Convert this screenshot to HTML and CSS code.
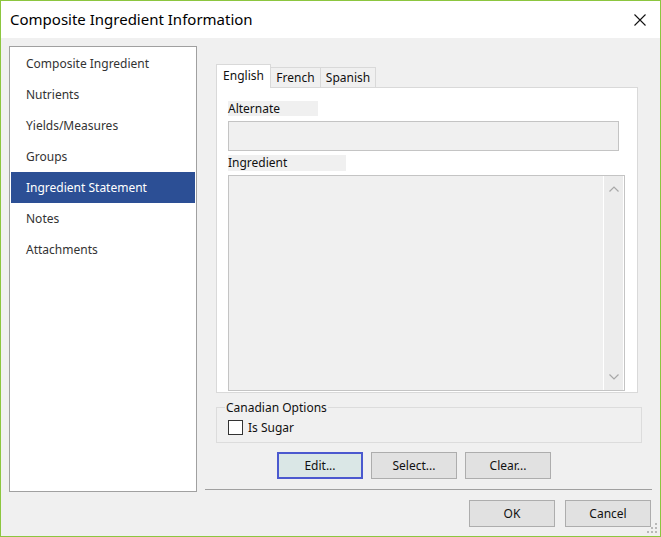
FILE: index.html
```html
<!DOCTYPE html>
<html lang="en">
<head>
    <meta charset="UTF-8">
    <title>Composite Ingredient Information</title>
    <link rel="stylesheet" href="styles.css">
</head>
<body>

<div class="window">
    <div class="titlebar">
        <span class="title">Composite Ingredient Information</span>
        <svg class="close" width="12" height="12" viewBox="0 0 12 12">
            <path d="M0.5 0.5 L11.5 11.5 M11.5 0.5 L0.5 11.5" stroke="#111" stroke-width="1.1" fill="none"/>
        </svg>
    </div>

    <div class="main">
        <ul class="nav_list">
            <li>Composite Ingredient</li>
            <li>Nutrients</li>
            <li>Yields/Measures</li>
            <li>Groups</li>
            <li class="selected">Ingredient Statement</li>
            <li>Notes</li>
            <li>Attachments</li>
        </ul>

        <div class="right_col">
            <div class="tabs">
                <div class="tab_row">
                    <div class="tab tab_active tab_en">English</div>
                    <div class="tab tab_fr">French</div>
                    <div class="tab tab_es">Spanish</div>
                </div>
                <div class="tab_panel">
                    <div class="field_label label_alt">Alternate</div>
                    <div class="text_box"></div>
                    <div class="field_label label_ing">Ingredient</div>
                    <div class="text_area">
                        <div class="text_area_body"></div>
                        <div class="scroll_bar">
                            <svg width="10" height="6" viewBox="0 0 10 6">
                                <path d="M0.5 5.5 L5 1 L9.5 5.5" stroke="#a8a8a8" stroke-width="1.2" fill="none"/>
                            </svg>
                            <svg width="10" height="6" viewBox="0 0 10 6">
                                <path d="M0.5 0.5 L5 5 L9.5 0.5" stroke="#a8a8a8" stroke-width="1.2" fill="none"/>
                            </svg>
                        </div>
                    </div>
                </div>
            </div>

            <fieldset class="options">
                <legend>Canadian Options</legend>
                <label class="check_row"><span class="check_box"></span>Is Sugar</label>
            </fieldset>

            <div class="action_row">
                <button class="btn btn_default">Edit...</button>
                <button class="btn">Select...</button>
                <button class="btn">Clear...</button>
            </div>

            <div class="footer">
                <button class="btn">OK</button>
                <button class="btn">Cancel</button>
            </div>
        </div>
    </div>

    <svg class="grip" width="10" height="10" viewBox="0 0 10 10">
        <rect x="8" y="0" width="2" height="2" fill="#b8b8b8"/>
        <rect x="4" y="4" width="2" height="2" fill="#b8b8b8"/>
        <rect x="8" y="4" width="2" height="2" fill="#b8b8b8"/>
        <rect x="0" y="8" width="2" height="2" fill="#b8b8b8"/>
        <rect x="4" y="8" width="2" height="2" fill="#b8b8b8"/>
        <rect x="8" y="8" width="2" height="2" fill="#b8b8b8"/>
    </svg>
</div>

</body>
</html>
```

FILE: styles.css
```css
* {
    box-sizing: border-box;
    margin: 0;
    padding: 0;
}

body {
    font-family: "Noto Sans", "Open Sans", sans-serif;
    font-size: 12px;
    color: #111;
}

li {
    list-style: none;
}

.window {
    width: 661px;
    height: 537px;
    border: 1px solid #8cc63f;
    background-color: #f0f0f0;
    display: flex;
    flex-direction: column;
    position: relative;
}

.titlebar {
    height: 37px;
    background-color: #fff;
    display: flex;
    align-items: center;
    justify-content: space-between;
    padding: 0 14px 0 9px;
}

.title {
    font-size: 15px;
    color: #000;
    margin-top: -1px;
}

.main {
    display: flex;
    padding: 8px 0 0 8px;
}

.nav_list {
    width: 188px;
    height: 446px;
    border: 1px solid #a0a0a0;
    background-color: #fff;
    padding: 1px;
}

.nav_list li {
    height: 31px;
    line-height: 32px;
    padding-left: 15px;
    color: #333;
}

.nav_list .selected {
    background-color: #2c4f95;
    color: #fff;
}

.right_col {
    width: 447px;
    margin-left: 8px;
    display: flex;
    flex-direction: column;
}

.tabs {
    margin: 18px 0 0 11px;
    width: 422px;
}

.tab_row {
    display: flex;
    align-items: flex-end;
    height: 23px;
}

.tab {
    height: 20px;
    line-height: 19px;
    border: 1px solid #d9d9d9;
    border-bottom: none;
    border-left: none;
    text-align: center;
    background-color: #f0f0f0;
}

.tab_active {
    height: 24px;
    line-height: 21px;
    border-left: 1px solid #d9d9d9;
    background-color: #fff;
    margin-bottom: -1px;
    position: relative;
}

.tab_en {
    width: 55px;
}

.tab_fr {
    width: 50px;
}

.tab_es {
    width: 55px;
}

.tab_panel {
    height: 306px;
    border: 1px solid #d9d9d9;
    background-color: #fff;
    padding: 13px 0 0 11px;
}

.field_label {
    height: 15px;
    line-height: 15px;
    background-color: #f0f0f0;
}

.label_alt {
    width: 90px;
}

.label_ing {
    width: 118px;
    height: 16px;
    margin-top: 4px;
}

.text_box {
    width: 391px;
    height: 30px;
    margin-top: 5px;
    border: 1px solid #c4c4c4;
    background-color: #f0f0f0;
}

.text_area {
    width: 397px;
    height: 216px;
    margin-top: 4px;
    border: 1px solid #c4c4c4;
    background-color: #f0f0f0;
    display: flex;
}

.text_area_body {
    flex: 1;
}

.scroll_bar {
    width: 21px;
    border-left: 1px solid #fff;
    border-right: 1px solid #fff;
    background-color: #ececec;
    display: flex;
    flex-direction: column;
    justify-content: space-between;
    align-items: center;
    padding: 10px 0 10px;
}

.options {
    width: 426px;
    height: 43px;
    margin: 7px 0 0 11px;
    border: 1px solid #dcdcdc;
    padding: 0 0 0 11px;
}

.options legend {
    margin-left: -3px;
    padding: 0 1px;
    line-height: 15px;
}

.check_row {
    display: flex;
    align-items: center;
    margin-top: 4px;
}

.check_box {
    width: 15px;
    height: 15px;
    border: 1px solid #333;
    background-color: #fff;
    margin-right: 5px;
}

.btn {
    height: 27px;
    width: 86px;
    border: 1px solid #adadad;
    background-color: #e1e1e1;
    font-family: inherit;
    font-size: 12px;
    color: #111;
}

.btn_default {
    border: 2px solid #4b59cf;
    background-color: #dae7e6;
}

.action_row {
    display: flex;
    gap: 8px;
    margin: 9px 0 0 72px;
}

.footer {
    border-top: 1px solid #a0a0a0;
    margin-top: 10px;
    padding-top: 10px;
    padding-right: 1px;
    display: flex;
    justify-content: flex-end;
    gap: 10px;
}

.grip {
    position: absolute;
    right: 3px;
    bottom: 3px;
}
```
